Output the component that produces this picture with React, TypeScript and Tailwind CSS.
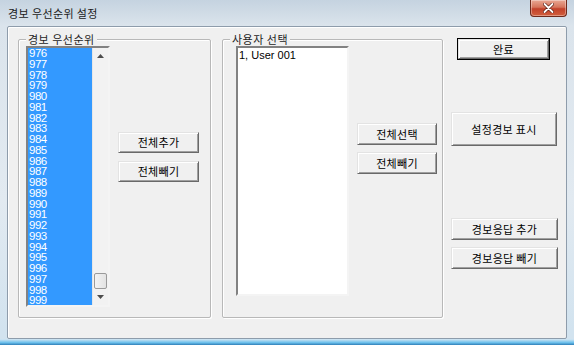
const priorities = Array.from({ length: 24 }, (_, i) => String(976 + i));

function Btn({ children, className = '' }: { children: React.ReactNode; className?: string }) {
  return (
    <button
      className={`flex items-center justify-center bg-[#f0f0f0] text-[11px] leading-none tracking-[0.3px] text-black border border-t-[#e3e3e3] border-l-[#e3e3e3] border-r-[#696969] border-b-[#696969] shadow-[inset_1px_1px_0_#fff,inset_-1px_-1px_0_#a0a0a0] font-['Noto_Sans_CJK_KR',sans-serif] ${className}`}
    >
      {children}
    </button>
  );
}

function Group({ label, className = '', children }: { label: string; className?: string; children: React.ReactNode }) {
  return (
    <div className={`relative mt-[1px] h-[279px] flex items-start border border-[#b8b8b8] rounded-[2px] shadow-[inset_1px_1px_0_#fff,1px_1px_0_#fff] ${className}`}>
      <span className="absolute top-[-8px] left-[7px] px-[2px] bg-[#f0f0f0] text-[11px] leading-[14px] tracking-[0.5px] text-[#1e1e1e] font-['Noto_Sans_CJK_KR',sans-serif]">
        {label}
      </span>
      {children}
    </div>
  );
}

function Arrow({ up }: { up?: boolean }) {
  return (
    <div className="h-[16px] flex items-center justify-center">
      <svg width="7" height="4" viewBox="0 0 7 4">
        <path d={up ? 'M0 4 L3.5 0 L7 4 Z' : 'M0 0 L3.5 4 L7 0 Z'} fill="#4d4d4d" />
      </svg>
    </div>
  );
}

export default function App() {
  return (
    <div className="w-[574px] h-[345px] flex flex-col bg-[linear-gradient(#c5d3e0,#dbe4ec_26px,#e2eaf1_200px,#d2e3ef_330px)] overflow-hidden">
      {/* title bar */}
      <div className="h-[26px] flex items-start justify-between">
        <span className="pl-[8px] pt-[6px] text-[11px] leading-[14px] tracking-[0.4px] text-[#1a1a1a] font-['Noto_Sans_CJK_KR',sans-serif]">
          경보 우선순위 설정
        </span>
        <div className="mr-[7px] w-[37px] h-[17px] flex items-center justify-center rounded-b-[4px] border border-t-0 border-[#6e2a1c] bg-[linear-gradient(#e9a894,#d6755c_45%,#c2412a_55%,#d2603e)] shadow-[inset_0_0_0_1px_rgba(255,255,255,0.35)]">
          <svg width="11" height="10" viewBox="0 0 11 10">
            <path d="M1.5 1 L9.5 9 M9.5 1 L1.5 9" stroke="#5a1d12" strokeWidth="3.2" strokeLinecap="round" />
            <path d="M1.5 1 L9.5 9 M9.5 1 L1.5 9" stroke="#fff" strokeWidth="1.8" strokeLinecap="round" />
          </svg>
        </div>
      </div>

      {/* client area */}
      <div className="mx-[7px] h-[313px] border border-[#8e9cab] rounded-[2px] bg-[#f0f0f0] shadow-[inset_1px_1px_0_#fff] flex items-start pl-[10px] pt-[11px]">
        <Group label="경보 우선순위" className="w-[193px] pl-[7px] pt-[6px]">
          <div className="w-[84px] h-[261px] flex border-2 border-t-[#828282] border-l-[#828282] border-r-[#f4f4f4] border-b-[#f4f4f4] bg-white">
            <div className="flex-1 bg-[#3399ff]">
              {priorities.map((p) => (
                <div key={p} className="h-[10.75px] leading-[10.75px] pl-[1px] text-[11.5px] tracking-[-0.5px] text-white font-['Liberation_Sans',sans-serif]">
                  {p}
                </div>
              ))}
            </div>
            <div className="w-[16px] flex flex-col bg-[#f2f2f2] border-l border-[#e6e6e6]">
              <Arrow up />
              <div className="flex-1" />
              <div className="h-[16px] mx-[1px] border border-[#9a9a9a] rounded-[2px] bg-[linear-gradient(90deg,#f3f3f3,#e3e3e3)]" />
              <Arrow />
            </div>
          </div>
          <div className="ml-[8px] mt-[86px] flex flex-col gap-[8px]">
            <Btn className="w-[81px] h-[21px]">전체추가</Btn>
            <Btn className="w-[81px] h-[21px]">전체빼기</Btn>
          </div>
        </Group>

        <Group label="사용자 선택" className="ml-[11px] w-[221px] pl-[13px] pt-[6px]">
          <div className="w-[113px] h-[250px] bg-white border-2 border-t-[#828282] border-l-[#828282] border-r-[#f4f4f4] border-b-[#f4f4f4] pl-[1px] pt-[1px] text-[11px] leading-[13px] text-black font-['Liberation_Sans',sans-serif]">
            1, User 001
          </div>
          <div className="ml-[8px] mt-[77px] flex flex-col gap-[7px]">
            <Btn className="w-[80px] h-[22px]">전체선택</Btn>
            <Btn className="w-[80px] h-[22px]">전체빼기</Btn>
          </div>
        </Group>

        <div className="ml-[8px] w-[106px] flex flex-col">
          <div className="ml-[6px] w-[93px] h-[22px] border border-black flex">
            <Btn className="flex-1">완료</Btn>
          </div>
          <Btn className="mt-[52px] w-[106px] h-[34px]">설정경보 표시</Btn>
          <Btn className="mt-[72px] w-[107px] h-[22px]">경보응답 추가</Btn>
          <Btn className="mt-[7px] w-[107px] h-[22px]">경보응답 빼기</Btn>
        </div>
      </div>

      {/* bottom frame */}
      <div className="flex-1 bg-[linear-gradient(#d8e8f3,#6cc0ec_60%,#2f7fb8)]" />
    </div>
  );
}
